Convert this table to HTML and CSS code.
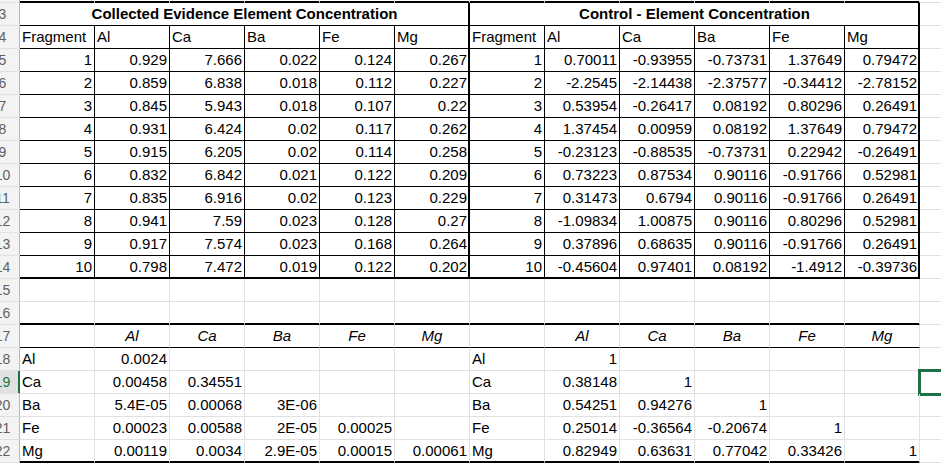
FILE: index.html
```html
<!DOCTYPE html>
<html lang="en">
<head>
<meta charset="utf-8">
<title>Element Concentration</title>
<link rel="stylesheet" href="styles.css">
</head>
<body>
<div class="sheet">
  <div class="r r2"><div class="h"></div><div class="c tb"></div><div class="c tb"></div><div class="c tb"></div><div class="c tb"></div><div class="c tb"></div><div class="c tb"></div><div class="c tb"></div><div class="c tb"></div><div class="c tb"></div><div class="c tb"></div><div class="c tb"></div><div class="c tb"></div><div class="c"></div></div>

  <div class="r"><div class="h">3</div><div class="c k tr title span6">Collected Evidence Element Concentration</div><div class="c k tr title span6">Control - Element Concentration</div><div class="c"></div></div>

  <div class="r"><div class="h">4</div><div class="c k">Fragment</div><div class="c k">Al</div><div class="c k">Ca</div><div class="c k">Ba</div><div class="c k">Fe</div><div class="c k tr">Mg</div><div class="c k">Fragment</div><div class="c k">Al</div><div class="c k">Ca</div><div class="c k">Ba</div><div class="c k">Fe</div><div class="c k tr">Mg</div><div class="c"></div></div>

  <div class="r"><div class="h">5</div><div class="c k n">1</div><div class="c k n">0.929</div><div class="c k n">7.666</div><div class="c k n">0.022</div><div class="c k n">0.124</div><div class="c k n tr">0.267</div><div class="c k n">1</div><div class="c k n">0.70011</div><div class="c k n">-0.93955</div><div class="c k n">-0.73731</div><div class="c k n">1.37649</div><div class="c k n tr">0.79472</div><div class="c"></div></div>

  <div class="r"><div class="h">6</div><div class="c k n">2</div><div class="c k n">0.859</div><div class="c k n">6.838</div><div class="c k n">0.018</div><div class="c k n">0.112</div><div class="c k n tr">0.227</div><div class="c k n">2</div><div class="c k n">-2.2545</div><div class="c k n">-2.14438</div><div class="c k n">-2.37577</div><div class="c k n">-0.34412</div><div class="c k n tr">-2.78152</div><div class="c"></div></div>

  <div class="r"><div class="h">7</div><div class="c k n">3</div><div class="c k n">0.845</div><div class="c k n">5.943</div><div class="c k n">0.018</div><div class="c k n">0.107</div><div class="c k n tr">0.22</div><div class="c k n">3</div><div class="c k n">0.53954</div><div class="c k n">-0.26417</div><div class="c k n">0.08192</div><div class="c k n">0.80296</div><div class="c k n tr">0.26491</div><div class="c"></div></div>

  <div class="r"><div class="h">8</div><div class="c k n">4</div><div class="c k n">0.931</div><div class="c k n">6.424</div><div class="c k n">0.02</div><div class="c k n">0.117</div><div class="c k n tr">0.262</div><div class="c k n">4</div><div class="c k n">1.37454</div><div class="c k n">0.00959</div><div class="c k n">0.08192</div><div class="c k n">1.37649</div><div class="c k n tr">0.79472</div><div class="c"></div></div>

  <div class="r"><div class="h">9</div><div class="c k n">5</div><div class="c k n">0.915</div><div class="c k n">6.205</div><div class="c k n">0.02</div><div class="c k n">0.114</div><div class="c k n tr">0.258</div><div class="c k n">5</div><div class="c k n">-0.23123</div><div class="c k n">-0.88535</div><div class="c k n">-0.73731</div><div class="c k n">0.22942</div><div class="c k n tr">-0.26491</div><div class="c"></div></div>

  <div class="r"><div class="h">10</div><div class="c k n">6</div><div class="c k n">0.832</div><div class="c k n">6.842</div><div class="c k n">0.021</div><div class="c k n">0.122</div><div class="c k n tr">0.209</div><div class="c k n">6</div><div class="c k n">0.73223</div><div class="c k n">0.87534</div><div class="c k n">0.90116</div><div class="c k n">-0.91766</div><div class="c k n tr">0.52981</div><div class="c"></div></div>

  <div class="r"><div class="h">11</div><div class="c k n">7</div><div class="c k n">0.835</div><div class="c k n">6.916</div><div class="c k n">0.02</div><div class="c k n">0.123</div><div class="c k n tr">0.229</div><div class="c k n">7</div><div class="c k n">0.31473</div><div class="c k n">0.6794</div><div class="c k n">0.90116</div><div class="c k n">-0.91766</div><div class="c k n tr">0.26491</div><div class="c"></div></div>

  <div class="r"><div class="h">12</div><div class="c k n">8</div><div class="c k n">0.941</div><div class="c k n">7.59</div><div class="c k n">0.023</div><div class="c k n">0.128</div><div class="c k n tr">0.27</div><div class="c k n">8</div><div class="c k n">-1.09834</div><div class="c k n">1.00875</div><div class="c k n">0.90116</div><div class="c k n">0.80296</div><div class="c k n tr">0.52981</div><div class="c"></div></div>

  <div class="r"><div class="h">13</div><div class="c k n">9</div><div class="c k n">0.917</div><div class="c k n">7.574</div><div class="c k n">0.023</div><div class="c k n">0.168</div><div class="c k n tr">0.264</div><div class="c k n">9</div><div class="c k n">0.37896</div><div class="c k n">0.68635</div><div class="c k n">0.90116</div><div class="c k n">-0.91766</div><div class="c k n tr">0.26491</div><div class="c"></div></div>

  <div class="r"><div class="h">14</div><div class="c k n tb">10</div><div class="c k n tb">0.798</div><div class="c k n tb">7.472</div><div class="c k n tb">0.019</div><div class="c k n tb">0.122</div><div class="c k n tr tb">0.202</div><div class="c k n tb">10</div><div class="c k n tb">-0.45604</div><div class="c k n tb">0.97401</div><div class="c k n tb">0.08192</div><div class="c k n tb">-1.4912</div><div class="c k n tr tb">-0.39736</div><div class="c"></div></div>

  <div class="r"><div class="h">15</div><div class="c"></div><div class="c"></div><div class="c"></div><div class="c"></div><div class="c"></div><div class="c"></div><div class="c"></div><div class="c"></div><div class="c"></div><div class="c"></div><div class="c"></div><div class="c"></div><div class="c"></div></div>

  <div class="r"><div class="h">16</div><div class="c tb"></div><div class="c tb"></div><div class="c tb"></div><div class="c tb"></div><div class="c tb"></div><div class="c tb"></div><div class="c tb"></div><div class="c tb"></div><div class="c tb"></div><div class="c tb"></div><div class="c tb"></div><div class="c tb"></div><div class="c"></div></div>

  <div class="r"><div class="h">17</div><div class="c bb"></div><div class="c bb i">Al</div><div class="c bb i">Ca</div><div class="c bb i">Ba</div><div class="c bb i">Fe</div><div class="c bb i">Mg</div><div class="c bb"></div><div class="c bb i">Al</div><div class="c bb i">Ca</div><div class="c bb i">Ba</div><div class="c bb i">Fe</div><div class="c bb i">Mg</div><div class="c"></div></div>

  <div class="r"><div class="h">18</div><div class="c">Al</div><div class="c n">0.0024</div><div class="c"></div><div class="c"></div><div class="c"></div><div class="c"></div><div class="c">Al</div><div class="c n">1</div><div class="c"></div><div class="c"></div><div class="c"></div><div class="c"></div><div class="c"></div></div>

  <div class="r"><div class="h hsel">19</div><div class="c">Ca</div><div class="c n">0.00458</div><div class="c n">0.34551</div><div class="c"></div><div class="c"></div><div class="c"></div><div class="c">Ca</div><div class="c n">0.38148</div><div class="c n">1</div><div class="c"></div><div class="c"></div><div class="c"></div><div class="c sel"></div></div>

  <div class="r"><div class="h">20</div><div class="c">Ba</div><div class="c n">5.4E-05</div><div class="c n">0.00068</div><div class="c n">3E-06</div><div class="c"></div><div class="c"></div><div class="c">Ba</div><div class="c n">0.54251</div><div class="c n">0.94276</div><div class="c n">1</div><div class="c"></div><div class="c"></div><div class="c"></div></div>

  <div class="r"><div class="h">21</div><div class="c">Fe</div><div class="c n">0.00023</div><div class="c n">0.00588</div><div class="c n">2E-05</div><div class="c n">0.00025</div><div class="c"></div><div class="c">Fe</div><div class="c n">0.25014</div><div class="c n">-0.36564</div><div class="c n">-0.20674</div><div class="c n">1</div><div class="c"></div><div class="c"></div></div>

  <div class="r"><div class="h">22</div><div class="c tb">Mg</div><div class="c n tb">0.00119</div><div class="c n tb">0.0034</div><div class="c n tb">2.9E-05</div><div class="c n tb">0.00015</div><div class="c n tb">0.00061</div><div class="c tb">Mg</div><div class="c n tb">0.82949</div><div class="c n tb">0.63631</div><div class="c n tb">0.77042</div><div class="c n tb">0.33426</div><div class="c n tb">1</div><div class="c"></div></div>

  <div class="r"><div class="h">23</div><div class="c"></div><div class="c"></div><div class="c"></div><div class="c"></div><div class="c"></div><div class="c"></div><div class="c"></div><div class="c"></div><div class="c"></div><div class="c"></div><div class="c"></div><div class="c"></div><div class="c"></div></div>
</div>
</body>
</html>
```

FILE: styles.css
```css
* {
  box-sizing: border-box;
  margin: 0;
  padding: 0;
}

html, body {
  background: #ffffff;
}

body {
  width: 941px;
  height: 463px;
  overflow: hidden;
  font-family: "Liberation Sans", Arial, sans-serif;
  font-size: 15px;
  color: #000000;
}

.sheet {
  display: flex;
  flex-direction: column;
  width: 995px;
}

.r {
  display: grid;
  grid-template-columns: 20px repeat(13, 75px);
  height: 23px;
  flex: none;
}

.r2 {
  height: 3px;
}

.c {
  border-right: 1px solid #e1e1e1;
  border-bottom: 1px solid #e1e1e1;
  padding: 0 2px;
  line-height: 22px;
  white-space: nowrap;
  overflow: hidden;
}

.h {
  display: flex;
  justify-content: center;
  padding-right: 14px;
  background: #f3f3f3;
  border-right: 1px solid #b8b8b8;
  border-bottom: 1px solid #e1e1e1;
  color: #5f5f5f;
  font-size: 14px;
  line-height: 22px;
  white-space: nowrap;
  overflow: hidden;
}

.r2 .h,
.r2 .c {
  line-height: 0;
}

.hsel {
  background: #e1e1e1;
  color: #1e7145;
  border-right-color: #1e7145;
  box-shadow: inset -1px 0 0 #1e7145;
}

.k {
  border-right-color: #000000;
  border-bottom-color: #000000;
}

.n {
  text-align: right;
}

.title {
  font-weight: bold;
  text-align: center;
}

.span6 {
  grid-column: span 6;
}

.i {
  font-style: italic;
  text-align: center;
}

.bb {
  border-bottom-color: #000000;
}

.tb {
  border-bottom-color: #000000;
  box-shadow: inset 0 -1px 0 #000000;
}

.tr {
  border-right-color: #000000;
  box-shadow: inset -1px 0 0 #000000;
}

.tr.tb {
  box-shadow: inset -1px 0 0 #000000, inset 0 -1px 0 #000000;
}

.sel {
  outline: 3px solid #1e7145;
  outline-offset: -1px;
}
```
